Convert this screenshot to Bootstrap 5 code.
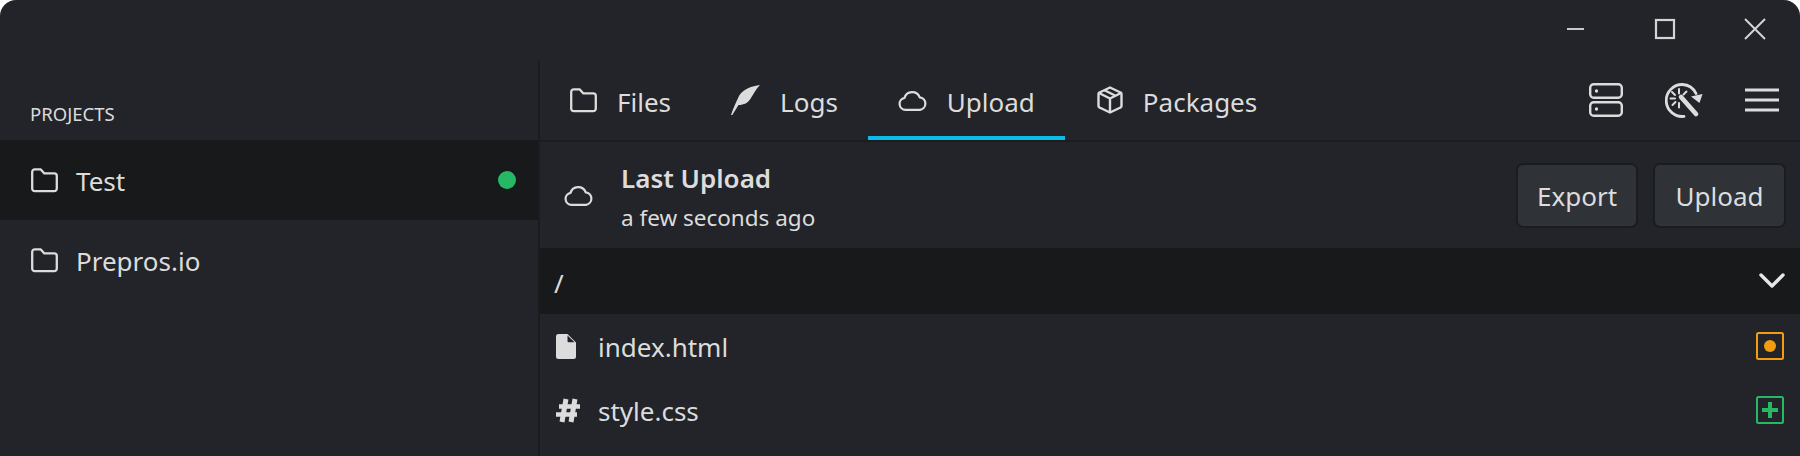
<!DOCTYPE html>
<html lang="en">
<head>
  <meta charset="UTF-8">
  <title>Prepros</title>
  <link rel="stylesheet" href="https://cdn.jsdelivr.net/npm/bootstrap@5.3.0/dist/css/bootstrap.min.css">
  <style>
    html, body { height: 456px; margin: 0; background: #fff; overflow: hidden; }
    body { font-family: "Noto Sans", "Open Sans", sans-serif; color: #dcdcdc; font-size: 26px; }
    svg { display: block; flex: none; }
    .app-shell { height: 456px; background: #222429; border-radius: 16px 16px 0 0; overflow: hidden; }
    .title-strip { height: 60px; }
    .win-btn { width: 90px; height: 58px; }
    .side-col { width: 540px; border-right: 2px solid #1b1c1f; }
    .side-head { height: 80px; padding: 42px 0 0 30px; font-size: 18.5px; line-height: 24px; }
    .proj-row { height: 80px; padding: 0 22px 0 31px; gap: 18px; }
    .proj-row.on { background: #18191b; }
    .status-dot { width: 18px; height: 18px; border-radius: 50%; background: #27b866; }
    .row-text { padding-top: 4px; line-height: 36px; }
    .proj-row .row-text, .file-row .row-text { padding-top: 2px; }
    .tab-strip { height: 82px; border-bottom: 2px solid #1b1c1f; }
    .tab-item { height: 80px; padding: 0 30px 0 30px; gap: 20px; color: #dcdcdc; text-decoration: none; }
    .tab-item.on { box-shadow: inset 0 -4px 0 #0dbce6; }
    .tool-btn { gap: 42px; padding-right: 21px; }
    .upload-head { height: 106px; padding: 0 14px 0 24px; }
    .head-copy { padding-top: 4px; }
    .head-title { font-weight: 600; line-height: 34px; }
    .head-sub { font-size: 22.5px; line-height: 32px; margin-top: 7px; }
    .flat-btn { height: 65px; padding: 2px 0 0; font-size: 26px; color: #dcdcdc; background: #2f3237; border: 2px solid #1b1c1f; border-radius: 7px; }
    .flat-btn:hover { color: #dcdcdc; background: #2f3237; border-color: #1b1c1f; }
    .export-btn { width: 122px; }
    .send-btn { width: 133px; }
    .btn-gap { gap: 15px; }
    .path-bar { height: 66px; background: #18191b; padding: 0 15px 0 14px; }
    .file-row { height: 64px; padding: 0 16px 0 16px; }
    .file-glyph { width: 42px; }
    .change-box { width: 28px; height: 28px; }
  </style>
</head>
<body>
  <div class="app-shell d-flex flex-column">
    <div class="title-strip d-flex justify-content-end">
      <div class="win-btn d-flex align-items-center justify-content-center">
        <svg width="20" height="20" viewBox="0 0 20 20"><path d="M2 10h17" stroke="#c8c8c8" stroke-width="2"/></svg>
      </div>
      <div class="win-btn d-flex align-items-center justify-content-center">
        <svg width="22" height="22" viewBox="0 0 22 22"><rect x="2" y="2" width="18" height="18" fill="none" stroke="#d4d4d4" stroke-width="2.200"/></svg>
      </div>
      <div class="win-btn d-flex align-items-center justify-content-center">
        <svg width="22" height="22" viewBox="0 0 22 22"><path d="M1 1l20 20M21 1L1 21" stroke="#d4d4d4" stroke-width="2"/></svg>
      </div>
    </div>

    <div class="d-flex flex-grow-1">
      <!-- Sidebar -->
      <div class="side-col flex-none">
        <div class="side-head">PROJECTS</div>
        <div class="proj-row on d-flex align-items-center">
          <svg width="27" height="25" viewBox="0 0 27 25"><path d="M1.200 4a2.600 2.600 0 0 1 2.600-2.600h6l3.600 4h9.800a2.600 2.600 0 0 1 2.600 2.600v12.600a2.600 2.600 0 0 1-2.600 2.600H3.800a2.600 2.600 0 0 1-2.600-2.600z" fill="none" stroke="#dcdcdc" stroke-width="2.300" stroke-linejoin="round"/></svg>
          <span class="row-text">Test</span>
          <span class="status-dot ms-auto"></span>
        </div>
        <div class="proj-row d-flex align-items-center">
          <svg width="27" height="25" viewBox="0 0 27 25"><path d="M1.200 4a2.600 2.600 0 0 1 2.600-2.600h6l3.600 4h9.800a2.600 2.600 0 0 1 2.600 2.600v12.600a2.600 2.600 0 0 1-2.600 2.600H3.800a2.600 2.600 0 0 1-2.600-2.600z" fill="none" stroke="#dcdcdc" stroke-width="2.300" stroke-linejoin="round"/></svg>
          <span class="row-text">Prepros.io</span>
        </div>
      </div>

      <!-- Main -->
      <div class="flex-grow-1 d-flex flex-column">
        <div class="tab-strip d-flex">
          <a class="tab-item d-flex align-items-center" href="#">
            <svg width="27" height="25" viewBox="0 0 27 25"><path d="M1.200 4a2.600 2.600 0 0 1 2.600-2.600h6l3.600 4h9.800a2.600 2.600 0 0 1 2.600 2.600v12.600a2.600 2.600 0 0 1-2.600 2.600H3.800a2.600 2.600 0 0 1-2.600-2.600z" fill="none" stroke="#dcdcdc" stroke-width="2.300" stroke-linejoin="round"/></svg>
            <span class="row-text">Files</span>
          </a>
          <a class="tab-item d-flex align-items-center" href="#">
            <svg width="29" height="30" viewBox="0 0 29 30"><path d="M29 0C21 1 12 4 8 11 5 17 2 24 0 30L1.300 30 7.500 20C13 20 17 18 20 13 23 8 25 4 29 0z" fill="#dcdcdc"/></svg>
            <span class="row-text">Logs</span>
          </a>
          <a class="tab-item on d-flex align-items-center" href="#">
            <svg width="29" height="21" viewBox="0 0 29 21"><path d="M7.500 19.800a6 6 0 0 1-1-11.900 8 8 0 0 1 15.200-.6 6.300 6.300 0 0 1 .3 12.500z" fill="none" stroke="#dcdcdc" stroke-width="2.200" stroke-linejoin="round"/></svg>
            <span class="row-text">Upload</span>
          </a>
          <a class="tab-item d-flex align-items-center" href="#">
            <svg width="28" height="28" viewBox="-2 0 28 28"><path d="M13 1.500l10.500 5a1.500 1.500 0 0 1 1 1.400v12.200a1.500 1.500 0 0 1-1 1.400L13 26.500 2.500 21.500a1.500 1.500 0 0 1-1-1.400V7.900a1.500 1.500 0 0 1 1-1.400z" fill="none" stroke="#dcdcdc" stroke-width="2.400" stroke-linejoin="round"/><path d="M2 7l11 5.500L24 7M13 12.500v14M7.500 4.200l11 5.500" fill="none" stroke="#dcdcdc" stroke-width="2.400"/></svg>
            <span class="row-text">Packages</span>
          </a>
          <div class="tool-btn ms-auto d-flex align-items-center">
            <svg width="34" height="34" viewBox="0 0 34 34"><rect x="1.200" y="1.200" width="31.600" height="13.600" rx="3.500" fill="none" stroke="#dcdcdc" stroke-width="2.400"/><rect x="1.200" y="19.200" width="31.600" height="13.600" rx="3.500" fill="none" stroke="#dcdcdc" stroke-width="2.400"/><circle cx="7.500" cy="8" r="1.700" fill="#dcdcdc"/><circle cx="7.500" cy="26" r="1.700" fill="#dcdcdc"/></svg>
            <svg width="38" height="35" viewBox="0 0 38 35"><path d="M31 10.500A16 16 0 0 0 17.500 1.500 16 16 0 1 0 19 33.400" fill="none" stroke="#dcdcdc" stroke-width="2.800" stroke-linecap="round"/><path d="M37.500 11L34.500 20 26 13.500z" fill="#dcdcdc"/><path d="M16 14l15 17" stroke="#dcdcdc" stroke-width="4.600" stroke-linecap="round"/><path d="M14 6v4.500M14 20v4.500M5.500 15.500h4.500M7 9l3 3M21.500 8.500l-3 3M7.500 22l3-3" stroke="#dcdcdc" stroke-width="2" stroke-linecap="round"/></svg>
            <svg width="34" height="24" viewBox="0 0 34 24"><path d="M0 2h34M0 12h34M0 22h34" stroke="#dcdcdc" stroke-width="3.200"/></svg>
          </div>
        </div>

        <div class="upload-head d-flex align-items-center">
          <svg width="29" height="21" viewBox="0 0 29 21"><path d="M7.500 19.800a6 6 0 0 1-1-11.900 8 8 0 0 1 15.200-.6 6.300 6.300 0 0 1 .3 12.500z" fill="none" stroke="#dcdcdc" stroke-width="2.200" stroke-linejoin="round"/></svg>
          <div class="head-copy ms-4 ps-1">
            <div class="head-title">Last Upload</div>
            <div class="head-sub">a few seconds ago</div>
          </div>
          <div class="ms-auto d-flex btn-gap">
            <button class="btn flat-btn export-btn" type="button">Export</button>
            <button class="btn flat-btn send-btn" type="button">Upload</button>
          </div>
        </div>

        <div class="path-bar d-flex align-items-center justify-content-between">
          <span class="row-text">/</span>
          <svg width="26" height="16" viewBox="0 0 26 16"><path d="M2 2l11 11L24 2" fill="none" stroke="#e6e6e6" stroke-width="3.400" stroke-linecap="round" stroke-linejoin="round"/></svg>
        </div>

        <div class="file-row d-flex align-items-center">
          <div class="file-glyph">
            <svg width="20" height="25" viewBox="0 0 20 25"><path d="M2.500 0H11.500L20 8.500V22.500A2.500 2.500 0 0 1 17.500 25h-15A2.500 2.500 0 0 1 0 22.500v-20A2.500 2.500 0 0 1 2.500 0z" fill="#dcdcdc"/><path d="M11.500 1.500L18.500 8.300H12.700a1.200 1.200 0 0 1-1.200-1.200z" fill="#222429"/></svg>
          </div>
          <span class="row-text">index.html</span>
          <svg class="change-box ms-auto" viewBox="0 0 28 28"><rect x="1" y="1" width="26" height="26" rx="1.500" fill="none" stroke="#f39c12" stroke-width="2"/><circle cx="14" cy="14" r="6" fill="#f39c12"/></svg>
        </div>
        <div class="file-row d-flex align-items-center">
          <div class="file-glyph">
            <svg width="24" height="25" viewBox="0 0 24 25"><path d="M10 1L6 24M19 1l-4 23" stroke="#dcdcdc" stroke-width="5"/><path d="M3 8.500h21M0 16.500h21" stroke="#dcdcdc" stroke-width="4.500"/></svg>
          </div>
          <span class="row-text">style.css</span>
          <svg class="change-box ms-auto" viewBox="0 0 28 28"><rect x="1" y="1" width="26" height="26" rx="1.500" fill="none" stroke="#27b866" stroke-width="2"/><path d="M14 6v16M6 14h16" stroke="#27b866" stroke-width="4"/></svg>
        </div>
      </div>
    </div>
  </div>
</body>
</html>
